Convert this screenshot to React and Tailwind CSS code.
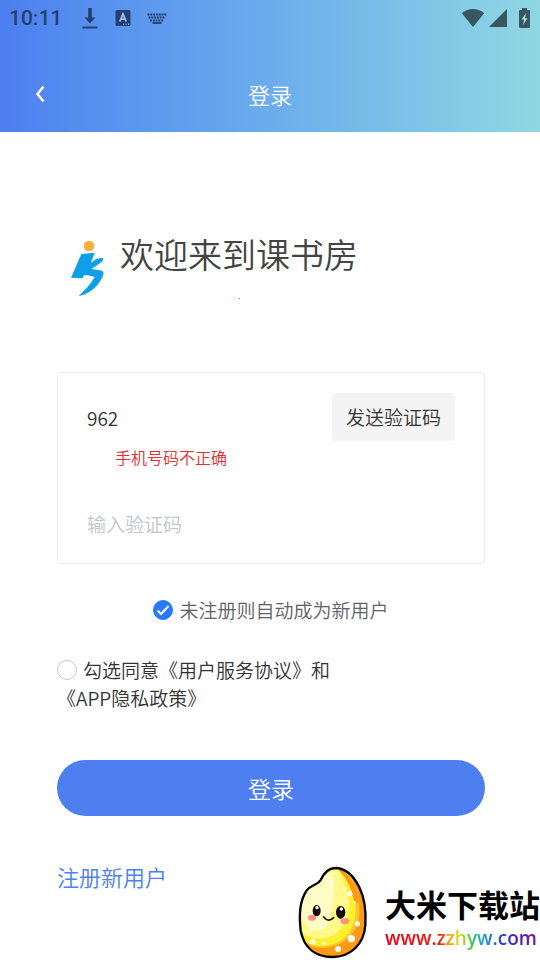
import React, { useState } from 'react';

const StatusBar = () => {
    return (
        <div className="flex items-center justify-between h-9 pl-[9px] pr-[10px] text-[#24406f]">
            <div className="flex items-center">
                <span className="font-['Roboto',sans-serif] font-medium text-[21px] leading-6">10:11</span>
                {/* Download */}
                <svg className="ml-5 w-4 h-6" viewBox="0 0 16 24" fill="currentColor" aria-hidden="true">
                    <path d="M6.200 2h3.600v9.500h3.700L8 17.500 2.500 11.500h3.700zM.5 20.500h15v2H.5z" />
                </svg>
                {/* Input method */}
                <svg className="ml-[17px] w-4 h-4" viewBox="0 0 16 16" aria-hidden="true">
                    <rect x="0.500" y="0" width="15" height="16" rx="1.500" fill="currentColor" />
                    <path d="M4.800 11.500L8 4l3.200 7.500M6 9.200h4" fill="none" stroke="#9cc0f5" strokeWidth="1.800" />
                    <path d="M8 14.200h1.200M10.500 14.200h1.200M13 14.200h1.200" stroke="#9cc0f5" strokeWidth="1" />
                </svg>
                {/* Keyboard */}
                <svg className="ml-4 w-5 h-3" viewBox="0 0 20 12" fill="none" stroke="currentColor" aria-hidden="true">
                    <path d="M0.500 2.500h19M1.500 5.500h17M3 8.500h14" strokeWidth="2.200" strokeDasharray="2 0.8" />
                    <path d="M5.500 11h9" strokeWidth="1.800" />
                </svg>
            </div>
            <div className="flex items-center text-[#39575f]">
                <svg className="w-6 h-5" viewBox="0 0 24 20" fill="currentColor" aria-hidden="true">
                    <path d="M.8 5.200C3.500 2.800 7.500 1 12 1s8.500 1.800 11.200 4.200L12 19z" />
                </svg>
                <svg className="ml-1 w-[18px] h-5" viewBox="0 0 18 20" fill="currentColor" aria-hidden="true">
                    <path d="M18 1v18H0z" />
                </svg>
                <svg className="ml-3 w-[11px] h-5" viewBox="0 0 11 20" aria-hidden="true">
                    <path d="M3 0h5v2h2q1 0 1 1v16q0 1-1 1H1q-1 0-1-1V3q0-1 1-1h2z" fill="currentColor" />
                    <path d="M7 5L2.500 11.500h2.600L4 17l4.500-6.800H6z" fill="#a5dfe6" />
                </svg>
            </div>
        </div>
    );
};

const Logo = () => (
    <svg className="w-[60px] h-[78px]" viewBox="0 -6 180 234" aria-hidden="true">
        <circle cx="87" cy="48" r="16" fill="#f9ae3f" />
        <path
            d="M64 72L104 68L93 98L108 88Q118 84 130 83Q130 92 122 98L94 117L120 121Q133 123 130 134C120 162 92 193 56 198L80 174Q96 157 104 141L84 136L72 136L67 145L33 143Z"
            fill="#0e9fe8"
        />
    </svg>
);

// Round tick box used by both agreement lines
const RoundCheck = ({ id, checked, onChange }) => (
    <span className="relative inline-flex shrink-0 w-5 h-5 align-middle">
        <input
            id={id}
            type="checkbox"
            checked={checked}
            onChange={onChange}
            className="appearance-none w-5 h-5 rounded-full border border-[#c8c9cc] bg-white checked:bg-[#2979ff] checked:border-[#2979ff]"
        />
        {checked && (
            <svg className="absolute inset-0 w-5 h-5 pointer-events-none" viewBox="0 0 20 20" fill="none" stroke="#fff" strokeWidth="2" aria-hidden="true">
                <path d="M4.500 10.500l3.500 3.500 7.500-8" />
            </svg>
        )}
    </span>
);

const Grain = () => (
    <svg className="w-[85px] h-[100px]" viewBox="0 0 255 300" aria-hidden="true">
        <defs>
            <clipPath id="grain">
                <path d="M135 24C170 24 192 50 208 82C224 115 229 150 226 195C222 255 180 291 127 291C75 291 42 262 32 212C27 165 28 125 50 91C62 75 82 76 92 60C102 38 115 25 135 24Z" />
            </clipPath>
        </defs>
        <g clipPath="url(#grain)">
            <path d="M0 0h255v300H0z" fill="#fb9a16" />
            <path d="M0 0H150C190 45 212 110 208 165C202 222 160 262 95 264C60 262 20 240 0 210z" fill="#ffc62a" />
            <path d="M0 0H140C178 45 200 105 196 162C190 220 156 256 92 258C50 256 20 236 0 204z" fill="#fff02e" />
            <path d="M0 0H130C158 45 180 105 176 152C170 200 138 234 88 236C45 234 20 210 0 180z" fill="#fff98a" />
            <path d="M35 130C50 80 90 40 130 40C130 90 140 140 105 205C60 225 30 190 35 130z" fill="#fffcc4" />
            <path d="M145 30C172 55 188 90 193 128L205 128C203 85 185 50 155 30z" fill="#ff9712" />
            <g fill="#fffde8">
                <circle cx="124" cy="66" r="6" />
                <circle cx="75" cy="105" r="6" />
                <circle cx="95" cy="118" r="5" />
                <circle cx="165" cy="88" r="5" />
                <circle cx="179" cy="101" r="8" />
                <circle cx="172" cy="124" r="5" />
                <circle cx="193" cy="127" r="4" />
                <circle cx="104" cy="196" r="6" />
                <circle cx="60" cy="210" r="5" />
                <circle cx="69" cy="246" r="8" />
                <circle cx="103" cy="250" r="5" />
                <circle cx="202" cy="191" r="8" />
                <circle cx="184" cy="236" r="11" />
                <circle cx="144" cy="267" r="9" />
            </g>
        </g>
        <path
            d="M135 24C170 24 192 50 208 82C224 115 229 150 226 195C222 255 180 291 127 291C75 291 42 262 32 212C27 165 28 125 50 91C62 75 82 76 92 60C102 38 115 25 135 24Z"
            fill="none"
            stroke="#000"
            strokeWidth="7"
        />
        <ellipse cx="66" cy="173" rx="12" ry="9" fill="#ff8f86" />
        <ellipse cx="165" cy="184" rx="13" ry="9" fill="#ff8f86" />
        <ellipse cx="80" cy="152" rx="12" ry="17" fill="#160d08" />
        <ellipse cx="152" cy="157" rx="14" ry="19" fill="#160d08" />
        <circle cx="81" cy="143" r="5" fill="#fff" />
        <circle cx="154" cy="147" r="5" fill="#fff" />
        <path d="M101 171q14 18 30 2" fill="none" stroke="#160d08" strokeWidth="5" strokeLinecap="round" />
    </svg>
);

const Watermark = () => (
    <div className="absolute bottom-0 right-0 flex items-center gap-[10px] pointer-events-none">
        <Grain />
        <div className="pt-4 whitespace-nowrap">
            <p className="text-[31px] leading-10 font-bold text-black">大米下载站</p>
            <p className="w-fit font-['Open_Sans','Noto_Sans',sans-serif] text-[19px] leading-7 font-semibold text-transparent bg-clip-text bg-[linear-gradient(90deg,#e60012_0%,#ee1c10_36%,#ff9a00_42%,#d9dc1b_49%,#3cc84a_57%,#16a6c4_64%,#2b50d8_74%,#3b20c8_85%,#7a10a8_100%)]">
                www.zzhyw.com
            </p>
        </div>
    </div>
);

const App = () => {
    const [phone, setPhone] = useState('962');
    const [code, setCode] = useState('');
    const [autoRegister, setAutoRegister] = useState(true);
    const [agree, setAgree] = useState(false);

    const phoneError = phone.length !== 11;

    return (
        <div className="relative min-h-screen bg-white text-[#333] font-[350] font-['Noto_Sans_CJK_SC',sans-serif]">
            <header className="bg-linear-to-r from-[#4d7ff0] to-[#90d7e3]">
                <StatusBar />
                <div className="grid grid-cols-[1fr_auto_1fr] items-center h-24 pt-6 pb-1 px-7 text-white">
                    <button type="button" aria-label="返回" className="w-6 h-6 flex items-center justify-center">
                        <svg className="w-3 h-5" viewBox="0 0 12 20" fill="none" stroke="currentColor" strokeWidth="2.500" aria-hidden="true">
                            <path d="M9.500 2.500L3.500 10l6 7.500" />
                        </svg>
                    </button>
                    <h1 className="text-[22px] leading-8">登录</h1>
                </div>
            </header>

            <main className="pl-[57px] pr-[55px] pt-24">
                <div className="flex items-start pl-[3px]">
                    <Logo />
                    <div>
                        <h2 className="text-[34px] leading-[52px] text-[#444]">欢迎来到课书房</h2>
                        <span className="block mx-auto mt-[18px] w-px h-px bg-green-500"></span>
                    </div>
                </div>

                <form onSubmit={(e) => e.preventDefault()}>
                    <div className="mt-[66px] h-48 border border-[#ebebeb] rounded px-[29px] pt-5">
                        <div className="flex items-center justify-between">
                            <input
                                type="tel"
                                aria-label="手机号码"
                                aria-describedby="phone-error"
                                value={phone}
                                onChange={(e) => setPhone(e.target.value)}
                                className="min-w-0 flex-1 h-12 text-[19px] outline-none"
                            />
                            <button type="button" className="h-12 px-[14px] bg-[#f4f4f4] rounded text-[19px]">
                                发送验证码
                            </button>
                        </div>
                        <p id="phone-error" className="h-8 pl-7 text-base leading-8 text-[#e43030]">
                            {phoneError && '手机号码不正确'}
                        </p>
                        <input
                            type="text"
                            aria-label="验证码"
                            placeholder="输入验证码"
                            value={code}
                            onChange={(e) => setCode(e.target.value)}
                            className="w-full h-12 mt-[26px] text-[19px] placeholder:text-[#c0c4cc] outline-none"
                        />
                    </div>

                    <div className="flex items-center justify-center gap-[6px] mt-8 text-[19px] leading-7 text-[#606266]">
                        <RoundCheck id="auto" checked={autoRegister} onChange={() => setAutoRegister(!autoRegister)} />
                        <label htmlFor="auto">未注册则自动成为新用户</label>
                    </div>

                    <div className="mt-8 text-[19px] leading-7">
                        <div className="flex items-center gap-[6px]">
                            <RoundCheck id="agree" checked={agree} onChange={() => setAgree(!agree)} />
                            <p>
                                <label htmlFor="agree">勾选同意</label>
                                <a href="#terms">《用户服务协议》</a>和
                            </p>
                        </div>
                        <a href="#privacy">《APP隐私政策》</a>
                    </div>

                    <button type="submit" className="w-full h-14 mt-12 rounded-full bg-[#4d7ff0] text-white text-[23px]">
                        登录
                    </button>
                </form>

                <a href="#register" className="inline-block mt-11 text-[22px] leading-8 text-[#4d7ff0]">注册新用户</a>
            </main>

            <Watermark />
        </div>
    );
};

export default App;
